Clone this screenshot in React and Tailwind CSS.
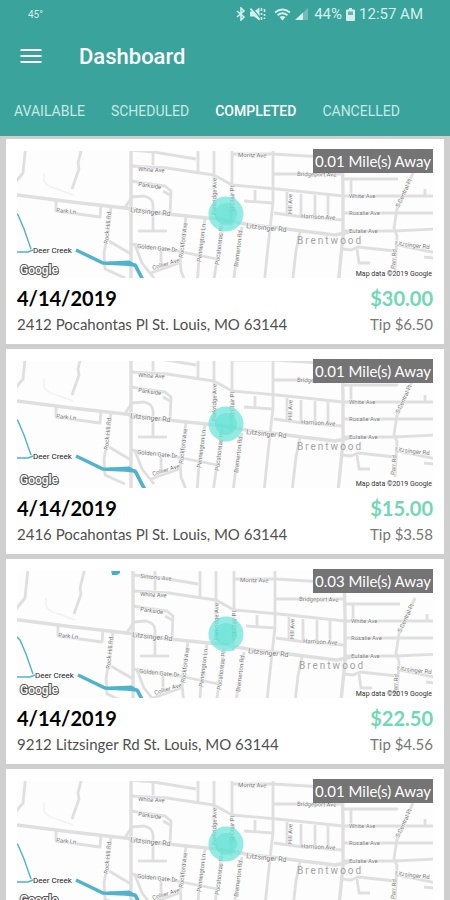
import React, { useState } from "react";

// Street geometry, drawn in a 416 x 127 frame
const mainRoads = [
  "M-6 43 L0 44 L55 51 L108 57 L122 59 L150 63 L200 68 L235 74 L262 77 L285 80 L318 84 L328 82 L336 80",
  "M114 -8 V135",
  "M325 -8 L326 40 V85 L321 135",
];

const roads = [
  "M9 -8 L6 22 L-3 33",
  "M66 -8 L61 12 L62 18 L55 38",
  "M39 50 V60 L83 66 L84 54",
  "M94 56 L92 75 L87 102 L88 118 L108 127",
  "M92 90 L114 103",
  "M114 -1 L137 1 L179 8",
  "M136 -8 V14",
  "M181 -8 V21",
  "M114 15 L150 17 L183 22 L197 24 L215 34 L260 38 L326 45 L420 45",
  "M197 -8 L197 58 L200 69",
  "M215 -8 L215 34 L214 75",
  "M256 -8 L256 51 L250 105 L247 135",
  "M215 3 H256 L340 8",
  "M256 23 H326",
  "M326 28 H381",
  "M334 29 V44",
  "M227 50 L256 52",
  "M238 39 V50",
  "M257 62 L286 66 L325 69",
  "M270 41 V63 M284 43 V65 M298 44 V66 M311 45 V67",
  "M114 30 L126 32 L148 35 L154 40 L153 64",
  "M146 40 L153 44",
  "M107 58 L115 46 L127 45 Q136 47 136 54 V79",
  "M121 80 H150",
  "M114 93 L160 100 L200 108",
  "M118 94 L125 112 L137 127",
  "M144 100 L144 112 L149 116",
  "M134 122 L162 112",
  "M169 66 L163 105 L164 120 L170 135",
  "M188 68 L182 107 L180 135",
  "M205 72 L199 115 L196 135",
  "M225 76 L218 118 L216 135",
  "M283 81 L279 100 L275 135",
  "M396 22 L380 58 L377 77 L380 85 L378 120",
  "M326 62 H420 M326 80 H377 L420 78",
  "M326 98 L334 99 L341 96 L378 100",
  "M340 98 L342 112 L353 112",
  "M380 94 L420 102",
  "M408 38 V45 M407 106 L416 107",
];

// name, x, y, angle, size
const streetLabels = [
  ["Simons Ave", 121, 2, 5],
  ["White Ave", 121, 20, 3],
  ["Parkside", 121, 35, 8],
  ["Litzsinger Rd", 113, 61, 6, 7],
  ["Park Ln", 39, 61, 6],
  ["Rock Hill Rd", 91, 93, -84],
  ["Golden Gate Dr", 120, 97, 6],
  ["Collier Ave", 136, 119, -17],
  ["Rockford Ave", 166, 107, -83],
  ["Pennington Ln", 184, 111, -83],
  ["Pocahontas Pl", 202, 114, -83],
  ["Bremerton Rd", 221, 116, -83],
  ["Parkridge Ave", 199, 64, -89],
  ["St Clair Pl", 217, 61, -89],
  ["Moritz Ave", 221, 6, 1],
  ["Bridgeport Ave", 280, 25, 1],
  ["Hill Ave", 275, 63, -89],
  ["Harrison Ave", 284, 67, 3],
  ["White Ave", 332, 47, 0],
  ["Rosalie Ave", 332, 64, 0],
  ["Eulalie Ave", 332, 82, 0],
  ["Litzsinger Rd", 229, 77, 6, 7],
  ["Litzsinger Rd", 378, 94, 7],
  ["S Central Pl", 382, 57, -65],
  ["Parr Rd", 378, 118, -86],
];

const jobs = [
  { date: "4/14/2019", price: "$30.00", tip: "$6.50", distance: "0.01", address: "2412 Pocahontas Pl St. Louis, MO 63144", dx: 0, dy: 0 },
  { date: "4/14/2019", price: "$15.00", tip: "$3.58", distance: "0.01", address: "2416 Pocahontas Pl St. Louis, MO 63144", dx: 0, dy: -4 },
  { date: "4/14/2019", price: "$22.50", tip: "$4.56", distance: "0.03", address: "9212 Litzsinger Rd St. Louis, MO 63144", dx: 2, dy: 5 },
  { date: "4/14/2019", price: "$30.00", tip: "$6.50", distance: "0.01", address: "2412 Pocahontas Pl St. Louis, MO 63144", dx: 0, dy: 0 },
];

const tabs = ["Available", "Scheduled", "Completed", "Cancelled"];

const JobMap = ({ dx, dy }) => {
  // labels too close to the top edge are left out
  const labels = streetLabels.filter((label) => label[2] + dy > 4);

  return (
    <svg
      viewBox="0 0 416 127"
      className="block w-full font-['Roboto',sans-serif]"
      role="img"
      aria-label="Job location map"
    >
      <rect width="416" height="127" fill="#fdfdfd" />
      <g transform={`translate(${dx} ${dy})`}>
        <g fill="none" stroke="#dfdfdf" strokeLinejoin="round">
          {roads.map((d) => (
            <path key={d} d={d} strokeWidth="2.8" />
          ))}
          {mainRoads.map((d) => (
            <path key={d} d={d} strokeWidth="3.4" />
          ))}
        </g>
        <path d="M27 22 V30 Q30 36 40 38 L56 44" fill="none" stroke="#f1f1f1" strokeWidth="1.5" />
        <g fill="none" stroke="#4fb3cc">
          <path d="M-3 60 L1 64 L7 78 L14 98 M-3 101 H11 L16 99" strokeWidth="1.4" />
          <path d="M59 99 L86 112 L108 113 L118 114 L128 133" strokeWidth="3.4" />
          <path d="M92 112 L112 111 L119 115 L128 133" strokeWidth="3" />
        </g>
        <path d="M92 -6 H101 V-3 L98 -1 L93 -1 Z" fill="#3fb3c0" />
        <g fill="#777" stroke="#fdfdfd" strokeWidth="1" paintOrder="stroke">
          {labels.map(([name, x, y, angle, size]) => (
            <text key={`${name}${x}`} fontSize={size || 6} transform={`translate(${x} ${y}) rotate(${angle})`}>
              {name}
            </text>
          ))}
        </g>
        <text x="16" y="102" fontSize="8" fill="#222">
          Deer Creek
        </text>
        <text x="280" y="93" fontSize="10" letterSpacing="2" fill="#a3a3a3">
          Brentwood
        </text>
      </g>
      <circle cx="209" cy="63" r="17.5" fill="#6fe6d9" fillOpacity="0.75" />
      <circle cx="209" cy="63" r="11" fill="#4edccc" fillOpacity="0.4" />
      <text x="3" y="123" fontSize="12" fontWeight="500" fill="#fff" stroke="#555" strokeWidth="2" paintOrder="stroke">
        Google
      </text>
      <text x="415" y="125" fontSize="7" textAnchor="end" fill="#333">
        Map data ©2019 Google
      </text>
    </svg>
  );
};

const JobCard = ({ job }) => (
  <article className="bg-white px-[11px] pt-3 pb-2">
    <div className="relative">
      <JobMap dx={job.dx} dy={job.dy} />
      <span className="absolute -top-0.5 right-0 bg-[#747474] px-0.5 text-[15px] leading-6 text-white">
        {job.distance} Mile(s) Away
      </span>
    </div>
    <div className="mt-2 flex justify-between text-xl leading-6 font-bold">
      <h2 className="text-black">{job.date}</h2>
      <span className="text-[#70d8b4]">{job.price}</span>
    </div>
    <div className="mt-0.5 flex justify-between text-[15px] leading-6">
      <p className="text-[#505050]">{job.address}</p>
      <span className="text-[#777]">Tip {job.tip}</span>
    </div>
  </article>
);

const StatusBar = () => (
  <div className="flex h-7 items-center justify-between pr-[27px] pl-7 text-[#d3efec]">
    <span className="text-[10px]">45°</span>
    <div className="flex items-center gap-1 text-[15px]">
      <svg viewBox="0 0 10 14" className="h-[14px] w-[10px]" fill="none" stroke="currentColor" strokeWidth="1.6">
        <path d="M1 4 L8 10 L5 13 V1 L8 4 L1 10" />
      </svg>
      <svg viewBox="0 0 16 14" className="mr-1 h-[14px] w-4" fill="none" stroke="currentColor" strokeWidth="1.6">
        <path d="M0 4.500 H4 L9.500 0.500 V13.500 L4 9.500 H0 Z" fill="currentColor" stroke="none" />
        <path d="M2 1 L11 12" stroke="#3aa39b" strokeWidth="1.2" />
        <path d="M0.500 1.500 L9.500 12.500" />
        <path d="M11.500 1 V4 M11.500 6 V8 M11.500 10 V13 M14.500 2 V5 M14.500 7 V9 M14.500 10.500 V12" />
      </svg>
      <svg viewBox="0 0 17 13" className="h-[13px] w-[17px]" fill="none" stroke="currentColor" strokeWidth="1.8">
        <path d="M1 4.500 Q8.500 -1.500 16 4.500 M3.500 7.300 Q8.500 3.300 13.500 7.300" />
        <path d="M5.500 9 Q8.500 6.800 11.500 9 L8.500 12.500 Z" fill="currentColor" stroke="none" />
      </svg>
      <svg viewBox="0 0 13 12" className="h-3 w-[13px]" fill="currentColor">
        <path d="M0 12 L13 0 V12 Z" opacity="0.35" />
        <path d="M0 12 L8 4.600 V12 Z" />
      </svg>
      <span className="pl-0.5">44%</span>
      <svg viewBox="0 0 9 13" className="h-[13px] w-[9px]">
        <path d="M3 0 H6 V1.500 H8 Q9 1.500 9 2.500 V12 Q9 13 8 13 H1 Q0 13 0 12 V2.500 Q0 1.500 1 1.500 H3 Z" fill="currentColor" />
        <path d="M2 3.500 H7 V7 H2 Z" fill="#3aa39b" opacity="0.75" />
      </svg>
      <span>12:57 AM</span>
    </div>
  </div>
);

const App = () => {
  const [activeTab, setActiveTab] = useState("Completed");

  return (
    <div className="min-h-screen bg-[#cfcfcf] font-['Lato',sans-serif]">
      <header className="bg-[#3aa39b] font-['Roboto',sans-serif]">
        <StatusBar />
        <div className="flex h-14 items-center gap-[37px] pl-5">
          <button aria-label="Open menu" className="text-white">
            <svg viewBox="0 0 22 16" className="h-4 w-[22px]" stroke="currentColor" strokeWidth="2">
              <path d="M0.500 2 H21.500 M0.500 8 H21.500 M0.500 14 H21.500" />
            </svg>
          </button>
          <h1 className="text-[22px] font-medium text-white">Dashboard</h1>
        </div>
        <nav className="flex h-[52px] items-center pt-0.5 pl-px">
          {tabs.map((tab) => (
            <button
              key={tab}
              onClick={() => setActiveTab(tab)}
              className={`px-[13px] text-sm uppercase ${
                tab === activeTab ? "font-medium text-white" : "text-[#c6e9e5]"
              }`}
            >
              {tab}
            </button>
          ))}
        </nav>
      </header>

      <main className="flex flex-col gap-[5px] px-[6px] pt-[3px]">
        {jobs.map((job, i) => (
          <JobCard key={i} job={job} />
        ))}
      </main>
    </div>
  );
};

export default App;
